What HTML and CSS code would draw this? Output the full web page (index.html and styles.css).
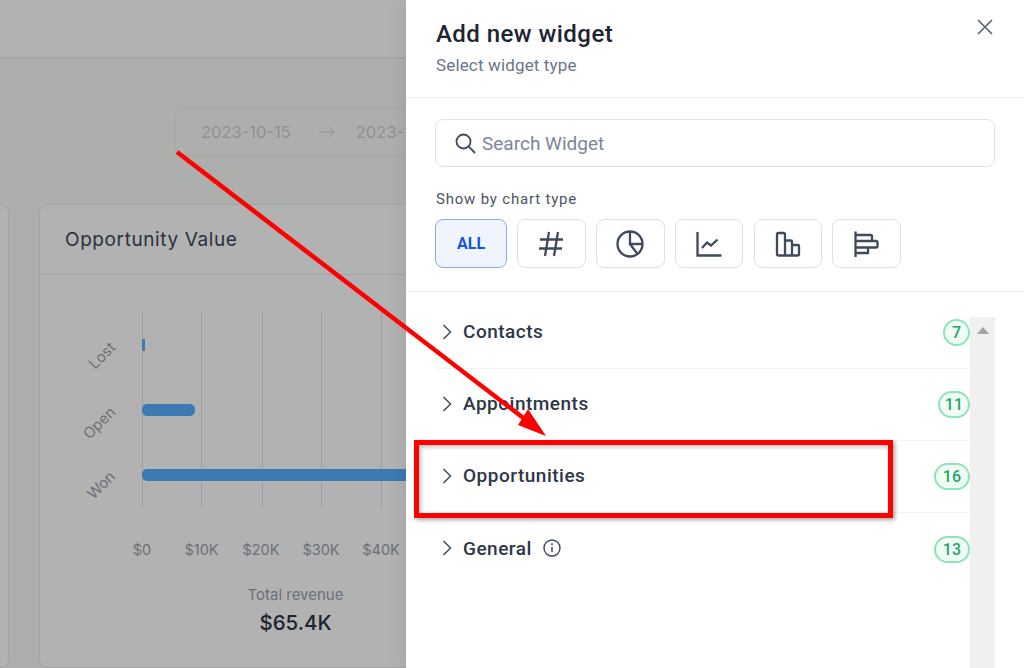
FILE: index.html
```html
<!DOCTYPE html>
<html>
<head>
    <title>Add new widget</title>
    <link rel="stylesheet" href="styles.css">
</head>
<body>
    <div class="app">
        <div class="dash">
            <div class="topbar"></div>
            <div class="date-row">
                <div class="date-range">
                    <span>2023-10-15</span>
                    <svg class="date-arrow" width="16" height="12" viewBox="0 0 16 12"><path d="M0 6H15M10 1l5 5-5 5" fill="none" stroke="#8f9290" stroke-width="1"/></svg>
                    <span>2023-10-21</span>
                </div>
            </div>
            <div class="cards">
                <div class="card card-prev">
                    <svg class="resize" width="8" height="14" viewBox="0 0 8 14"><path d="M-2 11L5 4M-2 14L5 8" stroke="#8b8e8c" stroke-width="1" fill="none"/></svg>
                </div>
                <div class="card card-main">
                    <div class="card-title">Opportunity Value</div>
                    <svg class="chart" width="366" height="270" viewBox="40 305 366 270">
                        <g stroke="#9a9ea4" stroke-width="1">
                            <path d="M142.500 312V508M201.500 312V508M262.500 312V508M321.500 312V508M381.500 312V508"/>
                        </g>
                        <rect x="142" y="339" width="3" height="12" rx="1" fill="#3b7ab3"/>
                        <rect x="142" y="404" width="53" height="12" rx="5" fill="#3b7ab3"/>
                        <rect x="142" y="469" width="300" height="12" rx="5" fill="#3b7ab3"/>
                        <g class="axis-y">
                            <text transform="translate(95 370) rotate(-45)">Lost</text>
                            <text transform="translate(89.500 440) rotate(-45)">Open</text>
                            <text transform="translate(93.500 500) rotate(-45)">Won</text>
                        </g>
                        <g class="axis-x">
                            <text x="142" y="555">$0</text>
                            <text x="201.500" y="555">$10K</text>
                            <text x="261" y="555">$20K</text>
                            <text x="321" y="555">$30K</text>
                            <text x="381" y="555">$40K</text>
                        </g>
                    </svg>
                    <div class="total">
                        <div class="total-label">Total revenue</div>
                        <div class="total-value">$65.4K</div>
                    </div>
                </div>
            </div>
        </div>

        <div class="panel">
            <div class="panel-head">
                <div>
                    <div class="panel-title">Add new widget</div>
                    <div class="panel-sub">Select widget type</div>
                </div>
                <svg class="close" width="16" height="16" viewBox="0 0 16 16"><path d="M1 1L15 15M15 1L1 15" stroke="#566070" stroke-width="1.600" fill="none"/></svg>
            </div>
            <div class="filters">
                <div class="search">
                    <svg width="22" height="22" viewBox="0 0 22 22"><circle cx="9.500" cy="9.500" r="7" fill="none" stroke="#3f4a5c" stroke-width="1.800"/><path d="M14.700 14.700L21 21" stroke="#3f4a5c" stroke-width="1.800" fill="none"/></svg>
                    <span>Search Widget</span>
                </div>
                <div class="filter-label">Show by chart type</div>
                <div class="types">
                    <div class="type type-all">ALL</div>
                    <div class="type">
                        <svg width="26" height="26" viewBox="0 0 26 26"><path d="M10 1L6 25M19 1L15 25M1 8.500H24M0 17.500H23" class="ico"/></svg>
                    </div>
                    <div class="type">
                        <svg width="28" height="28" viewBox="0 0 28 28"><circle cx="14" cy="14" r="12.500" class="ico"/><path d="M14 1.500V14H26.500M14 14L21.500 24" class="ico"/></svg>
                    </div>
                    <div class="type">
                        <svg width="26" height="26" viewBox="0 0 26 26"><path d="M1.500 1V24.500H25.500M6 17L11 11.500L15 14.500L21.500 8.500" class="ico"/></svg>
                    </div>
                    <div class="type">
                        <svg width="26" height="26" viewBox="0 0 26 26"><path d="M2 3.500a1.500 1.500 0 0 1 1.500-1.500H8.500a1.500 1.500 0 0 1 1.500 1.500V24.500H3.500A1.500 1.500 0 0 1 2 23ZM10 9.500H16a1 1 0 0 1 1 1V24.500H10ZM17 14H23a1 1 0 0 1 1 1V23a1.500 1.500 0 0 1-1.500 1.500H17Z" class="ico"/></svg>
                    </div>
                    <div class="type">
                        <svg width="26" height="26" viewBox="0 0 26 26"><path d="M1.500 0.500V26M1.500 4H17a1 1 0 0 1 1 1V10H1.500M1.500 10H22a1.500 1.500 0 0 1 1.500 1.500V15a1.500 1.500 0 0 1-1.500 1.500H1.500M1.500 16.500H14V22H1.500" class="ico"/></svg>
                    </div>
                </div>
            </div>
            <div class="list-wrap">
                <div class="rows">
                    <div class="row">
                        <svg class="chev" width="10" height="16" viewBox="0 0 10 16"><path d="M1.500 1L8.500 8L1.500 15" fill="none" stroke="#3f4a5c" stroke-width="1.500"/></svg>
                        <span class="row-name">Contacts</span>
                        <span class="badge">7</span>
                    </div>
                    <div class="row">
                        <svg class="chev" width="10" height="16" viewBox="0 0 10 16"><path d="M1.500 1L8.500 8L1.500 15" fill="none" stroke="#3f4a5c" stroke-width="1.500"/></svg>
                        <span class="row-name">Appointments</span>
                        <span class="badge badge-11">11</span>
                    </div>
                    <div class="row">
                        <svg class="chev" width="10" height="16" viewBox="0 0 10 16"><path d="M1.500 1L8.500 8L1.500 15" fill="none" stroke="#3f4a5c" stroke-width="1.500"/></svg>
                        <span class="row-name">Opportunities</span>
                        <span class="badge">16</span>
                    </div>
                    <div class="row">
                        <svg class="chev" width="10" height="16" viewBox="0 0 10 16"><path d="M1.500 1L8.500 8L1.500 15" fill="none" stroke="#3f4a5c" stroke-width="1.500"/></svg>
                        <span class="row-name">General</span>
                        <svg class="info" width="18" height="18" viewBox="0 0 18 18"><circle cx="9" cy="9" r="8" fill="none" stroke="#3f4a5c" stroke-width="1.400"/><path d="M9 8V13" stroke="#3f4a5c" stroke-width="1.500"/><circle cx="9" cy="5.300" r="1" fill="#3f4a5c"/></svg>
                        <span class="badge">13</span>
                    </div>
                </div>
                <div class="scrollbar"><div class="scroll-up"></div></div>
            </div>
        </div>
    </div>

    <!-- annotation drawn on top of the screenshot -->
    <div class="red-box"></div>
    <svg class="red-arrow" width="1024" height="668" viewBox="0 0 1024 668">
        <path d="M177 152L526 420" stroke="#ff0000" stroke-width="4.500" fill="none"/>
        <path d="M546 436L518 425L528 409Z" fill="#ff0000"/>
    </svg>
</body>
</html>
```

FILE: styles.css
```css
html, body {
    margin: 0;
    padding: 0;
    height: 668px;
    overflow: hidden;
}

body {
    font-family: "Roboto", "Liberation Sans", sans-serif;
    background: #fff;
}

.app {
    display: flex;
    height: 668px;
}

/* dimmed dashboard */
.dash {
    width: 406px;
    flex: none;
    overflow: hidden;
    background: #adafad;
    font-family: "Inter", "Liberation Sans", sans-serif;
}

.topbar {
    height: 57px;
    background: #b2b2b2;
    border-bottom: 2px solid #a5a6a5;
}

.date-row {
    height: 145px;
    box-sizing: border-box;
    padding: 48px 0 0 175px;
}

.date-range {
    width: 300px;
    height: 49px;
    box-sizing: border-box;
    display: flex;
    align-items: center;
    gap: 24px;
    padding-left: 25px;
    white-space: nowrap;
    font-size: 16.500px;
    color: #8f9290;
    border: 1px solid #a3a6ab;
    border-radius: 8px;
}

.date-arrow {
    margin-left: 4px;
    margin-right: -3px;
}

.cards {
    display: flex;
    gap: 30px;
    margin-left: -101px;
}

.card {
    height: 464px;
    box-sizing: border-box;
    flex: none;
    background: #b2b2b2;
    border: 1px solid #a2a4a8;
    border-radius: 8px;
}

.card-prev {
    width: 110px;
    display: flex;
    align-items: flex-end;
    padding-bottom: 4px;
}

.card-main {
    width: 500px;
}

.card-title {
    height: 70px;
    box-sizing: border-box;
    padding: 23px 0 0 25px;
    font-size: 19px;
    line-height: 24px;
    letter-spacing: 0.600px;
    color: #2b3140;
    border-bottom: 1px solid #a2a4a8;
}

.chart {
    display: block;
    margin-top: 30px;
}

.axis-y text {
    font-size: 15px;
    fill: #6b7078;
}

.axis-x text {
    font-size: 14.500px;
    fill: #6b7078;
    text-anchor: middle;
}

.total {
    width: 411px;
    padding-left: 100px;
    margin-top: 10px;
    box-sizing: border-box;
    text-align: center;
}

.total-label {
    font-size: 15px;
    line-height: 20px;
    color: #6b7078;
}

.total-value {
    margin-top: 4px;
    font-size: 20.500px;
    line-height: 28px;
    font-weight: 500;
    color: #1d2230;
}

/* widget drawer */
.panel {
    flex: 1;
    background: #fff;
    box-shadow: -6px 0 14px rgba(0, 0, 0, 0.06);
    position: relative;
}

.panel-head {
    height: 98px;
    box-sizing: border-box;
    display: flex;
    justify-content: space-between;
    padding: 19px 31px 0 30px;
    border-bottom: 1px solid #eceef1;
}

.panel-title {
    font-size: 24px;
    line-height: 30px;
    font-weight: 500;
    letter-spacing: 0.450px;
    color: #1d2433;
}

.panel-sub {
    margin-top: 6px;
    font-size: 17px;
    line-height: 20px;
    letter-spacing: 0.150px;
    color: #6c7689;
}

.filters {
    height: 194px;
    box-sizing: border-box;
    padding: 21px 29px 0;
    border-bottom: 1px solid #eceef1;
}

.search {
    height: 48px;
    box-sizing: border-box;
    display: flex;
    align-items: center;
    gap: 6px;
    padding-left: 18px;
    font-size: 19px;
    color: #7c8696;
    border: 1px solid #e0e3e8;
    border-radius: 8px;
}

.filter-label {
    margin-top: 23px;
    padding-left: 1px;
    font-size: 15px;
    line-height: 18px;
    letter-spacing: 0.800px;
    color: #4b5565;
}

.types {
    display: flex;
    gap: 10.300px;
    margin-top: 11px;
}

.type {
    width: 68.500px;
    height: 49px;
    box-sizing: border-box;
    display: flex;
    align-items: center;
    justify-content: center;
    border: 1.500px solid #dde1e8;
    border-radius: 8px;
}

.type-all {
    width: 72px;
    font-size: 16px;
    font-weight: 700;
    color: #1554e0;
    background: #eff4ff;
    border-color: #84adf5;
}

.ico {
    fill: none;
    stroke: #3f4a5c;
    stroke-width: 2.300;
}

.list-wrap {
    display: flex;
    padding: 5px 29px 0 30px;
}

.rows {
    flex: 1;
}

.row {
    height: 72px;
    box-sizing: border-box;
    display: flex;
    align-items: center;
    padding: 0 0 2px 6px;
    border-bottom: 1px solid #f1f3f6;
}

.row:last-child {
    border-bottom: none;
}

.chev {
    margin-right: 11px;
}

.row-name {
    font-size: 19px;
    font-weight: 500;
    letter-spacing: 0.500px;
    color: #2d3748;
}

.info {
    margin-left: 11px;
}

.badge {
    margin-left: auto;
    margin-top: 2px;
    min-width: 27px;
    height: 27px;
    box-sizing: border-box;
    padding: 0 7px;
    display: flex;
    align-items: center;
    justify-content: center;
    font-size: 16px;
    font-weight: 500;
    color: #27a567;
    background: #f0fdf6;
    border: 2px solid #8ce5b6;
    border-radius: 14px;
}

.badge-11 {
    padding: 0 5px;
    min-width: 32px;
}

.scrollbar {
    width: 25px;
    height: 351px;
    margin-top: 20px;
    flex: none;
    background: #f0f0f0;
    display: flex;
    justify-content: center;
    padding-top: 10px;
    box-sizing: border-box;
}

.scroll-up {
    width: 0;
    height: 0;
    border-left: 6px solid transparent;
    border-right: 6px solid transparent;
    border-bottom: 7px solid #a3a3a3;
}

/* annotation */
.red-box {
    position: absolute;
    left: 414px;
    top: 440px;
    width: 479px;
    height: 78px;
    box-sizing: border-box;
    border: 5px solid #ff0000;
    box-shadow: 2px 2px 4px rgba(0, 0, 0, 0.35), inset 2px 2px 4px rgba(0, 0, 0, 0.25);
}

.red-arrow {
    position: absolute;
    left: 0;
    top: 0;
}
```
